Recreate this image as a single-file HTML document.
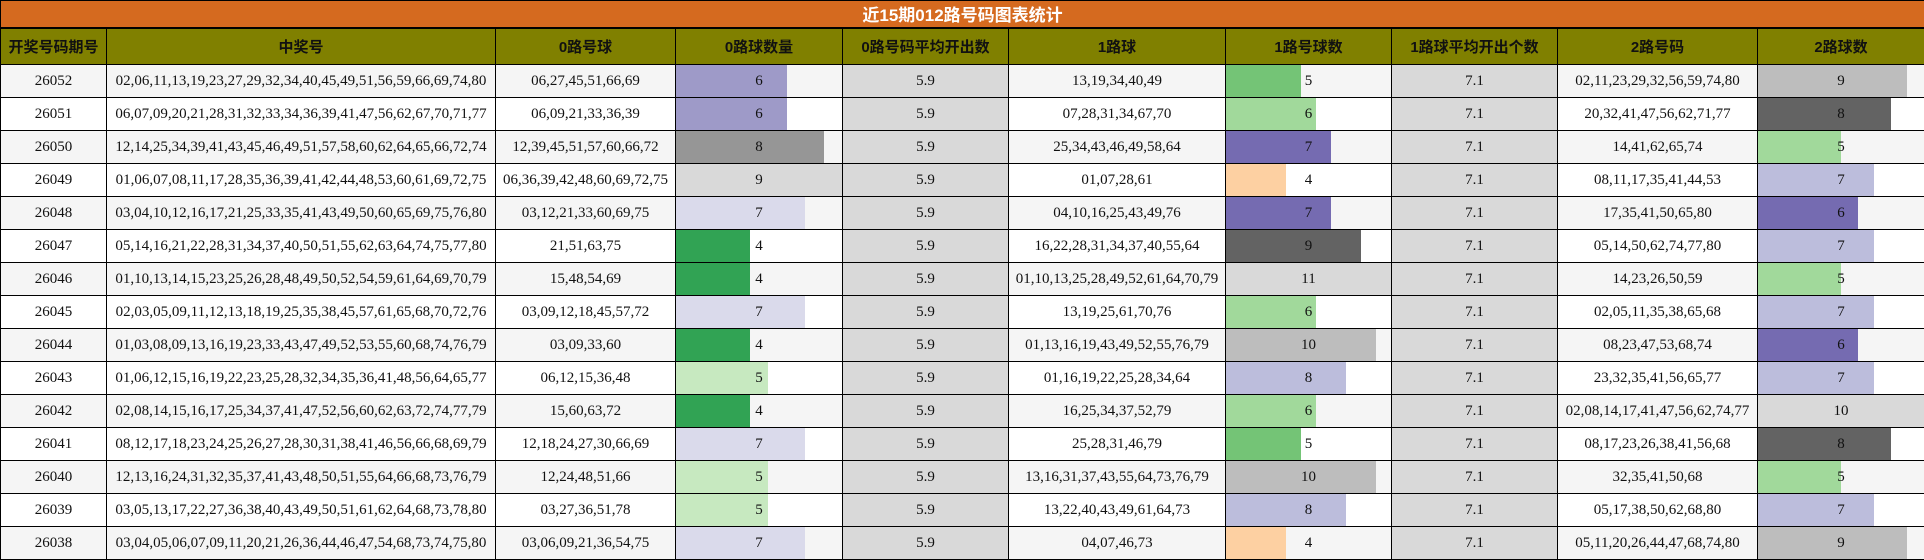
<!DOCTYPE html>
<html><head><meta charset="utf-8"><style>
*{margin:0;padding:0;box-sizing:border-box}
body{width:1924px;height:560px;background:#fff;overflow:hidden;font-family:"Liberation Serif","Noto Serif CJK SC","Noto Sans CJK SC",serif}
table{border-collapse:collapse;table-layout:fixed;width:1924px}
td,th{border:1px solid #000;text-align:center;font-size:15px;color:#111;white-space:nowrap;overflow:hidden;position:relative;padding:0}
.t{height:27px;background:#d56a1f;color:#fff;font-weight:bold;font-size:17px;font-family:"Liberation Sans","Noto Sans CJK SC",sans-serif;border-bottom:2px solid #000}
.h th{height:37px;background:#808000;font-weight:bold;font-size:15px;font-family:"Liberation Sans","Noto Sans CJK SC",sans-serif;color:#111}
tr.r td{height:33px}
tr.r:nth-child(odd) td{background:#f5f5f5}
tr.r:nth-child(even) td{background:#fff}
tr.r td.g{background:#d9d9d9}
.b{position:absolute;left:0;top:0;bottom:0}
td span{position:relative}
</style></head><body>
<table>
<colgroup><col style="width:106px"><col style="width:389px"><col style="width:180px"><col style="width:167px"><col style="width:166px"><col style="width:217px"><col style="width:166px"><col style="width:166px"><col style="width:200px"><col style="width:167px"></colgroup>
<tr><td class="t" colspan="10">近15期012路号码图表统计</td></tr>
<tr class="h"><th>开奖号码期号</th><th>中奖号</th><th>0路号球</th><th>0路球数量</th><th>0路号码平均开出数</th><th>1路球</th><th>1路号球数</th><th>1路球平均开出个数</th><th>2路号码</th><th>2路球数</th></tr>
<tbody id="tb"></tbody>
</table>
<script>
var D=[
["26052","02,06,11,13,19,23,27,29,32,34,40,45,49,51,56,59,66,69,74,80","06,27,45,51,66,69",6,"13,19,34,40,49",5,"02,11,23,29,32,56,59,74,80",9],
["26051","06,07,09,20,21,28,31,32,33,34,36,39,41,47,56,62,67,70,71,77","06,09,21,33,36,39",6,"07,28,31,34,67,70",6,"20,32,41,47,56,62,71,77",8],
["26050","12,14,25,34,39,41,43,45,46,49,51,57,58,60,62,64,65,66,72,74","12,39,45,51,57,60,66,72",8,"25,34,43,46,49,58,64",7,"14,41,62,65,74",5],
["26049","01,06,07,08,11,17,28,35,36,39,41,42,44,48,53,60,61,69,72,75","06,36,39,42,48,60,69,72,75",9,"01,07,28,61",4,"08,11,17,35,41,44,53",7],
["26048","03,04,10,12,16,17,21,25,33,35,41,43,49,50,60,65,69,75,76,80","03,12,21,33,60,69,75",7,"04,10,16,25,43,49,76",7,"17,35,41,50,65,80",6],
["26047","05,14,16,21,22,28,31,34,37,40,50,51,55,62,63,64,74,75,77,80","21,51,63,75",4,"16,22,28,31,34,37,40,55,64",9,"05,14,50,62,74,77,80",7],
["26046","01,10,13,14,15,23,25,26,28,48,49,50,52,54,59,61,64,69,70,79","15,48,54,69",4,"01,10,13,25,28,49,52,61,64,70,79",11,"14,23,26,50,59",5],
["26045","02,03,05,09,11,12,13,18,19,25,35,38,45,57,61,65,68,70,72,76","03,09,12,18,45,57,72",7,"13,19,25,61,70,76",6,"02,05,11,35,38,65,68",7],
["26044","01,03,08,09,13,16,19,23,33,43,47,49,52,53,55,60,68,74,76,79","03,09,33,60",4,"01,13,16,19,43,49,52,55,76,79",10,"08,23,47,53,68,74",6],
["26043","01,06,12,15,16,19,22,23,25,28,32,34,35,36,41,48,56,64,65,77","06,12,15,36,48",5,"01,16,19,22,25,28,34,64",8,"23,32,35,41,56,65,77",7],
["26042","02,08,14,15,16,17,25,34,37,41,47,52,56,60,62,63,72,74,77,79","15,60,63,72",4,"16,25,34,37,52,79",6,"02,08,14,17,41,47,56,62,74,77",10],
["26041","08,12,17,18,23,24,25,26,27,28,30,31,38,41,46,56,66,68,69,79","12,18,24,27,30,66,69",7,"25,28,31,46,79",5,"08,17,23,26,38,41,56,68",8],
["26040","12,13,16,24,31,32,35,37,41,43,48,50,51,55,64,66,68,73,76,79","12,24,48,51,66",5,"13,16,31,37,43,55,64,73,76,79",10,"32,35,41,50,68",5],
["26039","03,05,13,17,22,27,36,38,40,43,49,50,51,61,62,64,68,73,78,80","03,27,36,51,78",5,"13,22,40,43,49,61,64,73",8,"05,17,38,50,62,68,80",7],
["26038","03,04,05,06,07,09,11,20,21,26,36,44,46,47,54,68,73,74,75,80","03,06,09,21,36,54,75",7,"04,07,46,73",4,"05,11,20,26,44,47,68,74,80",9]];
var C0={4:"#31a354",5:"#c7e9c0",6:"#9e9ac8",7:"#dadaeb",8:"#969696",9:"#d9d9d9"};
var C1={4:"#fdd0a2",5:"#74c476",6:"#a1d99b",7:"#756bb1",8:"#bcbddc",9:"#636363",10:"#bdbdbd",11:"#d9d9d9"};
var C2={5:"#a1d99b",6:"#756bb1",7:"#bcbddc",8:"#636363",9:"#bdbdbd",10:"#d9d9d9"};
function bar(v,m,c){return '<td><div class="b" style="width:'+(v/m*100)+'%;background:'+c[v]+'"></div><span>'+v+'</span></td>';}
var h="";
D.forEach(function(r){h+='<tr class="r"><td>'+r[0]+'</td><td>'+r[1]+'</td><td>'+r[2]+'</td>'+bar(r[3],9,C0)+'<td class="g">5.9</td><td>'+r[4]+'</td>'+bar(r[5],11,C1)+'<td class="g">7.1</td><td>'+r[6]+'</td>'+bar(r[7],10,C2)+'</tr>';});
document.getElementById("tb").innerHTML=h;
</script>
</body></html>
